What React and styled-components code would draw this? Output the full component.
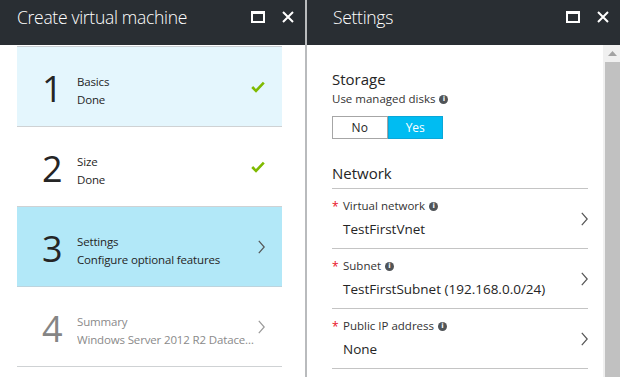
import React from 'react'
import styled, { createGlobalStyle } from 'styled-components'

const GlobalStyle = createGlobalStyle`
  html, body { margin: 0; padding: 0; }
  body {
    font-family: "Open Sans", "Noto Sans", "Liberation Sans", sans-serif;
    background: #b9bbbd;
    color: #252525;
  }
`;

const Page = styled.div`
  display: flex;
  gap: 2px;
  width: 620px;
  height: 377px;
  overflow: hidden;
`;

const Blade = styled.section`
  display: flex;
  flex-direction: column;
  width: ${p => p.width}px;
  flex-shrink: 0;
  background: #fff;
`;

const Header = styled.header`
  display: flex;
  align-items: center;
  box-sizing: border-box;
  height: 45px;
  flex-shrink: 0;
  background: #292e33;
  color: #fff;
  padding: 0 10px 12px ${p => p.pad}px;
`;

const Title = styled.h1`
  flex: 1;
  margin: 0;
  font-size: 17.5px;
  font-weight: 300;
  letter-spacing: -0.3px;
`;

const HeaderButton = styled.span`
  display: flex;
  width: 14px;
  height: 14px;
  align-items: center;
  justify-content: center;
  margin-left: 16px;
`;

const MaxIcon = () => (
  <svg width="14" height="12" viewBox="0 0 14 12">
    <rect x="1" y="1" width="12" height="10" fill="none" stroke="#fff" strokeWidth="2" />
    <rect x="0" y="0" width="14" height="3" fill="#fff" />
  </svg>
);

const CloseIcon = () => (
  <svg width="12" height="12" viewBox="0 0 12 12">
    <path d="M1 1 L11 11 M11 1 L1 11" stroke="#fff" strokeWidth="2" />
  </svg>
);

const StepList = styled.ul`
  list-style: none;
  margin: 1px 23px 0 17px;
  padding: 0;
  border-top: 1px solid #c8ced2;
`;

const Step = styled.li`
  display: flex;
  align-items: center;
  height: 79px;
  padding: 0 17px 0 25px;
  border-bottom: 1px solid ${p => p.active ? '#bcd4de' : '#cfd2d4'};
  background: ${p => p.active ? '#b2e8f8' : p.done ? '#e4f6fd' : '#fff'};
  color: ${p => p.muted ? '#8a8a8a' : '#252525'};
`;

const StepNumber = styled.span`
  width: 35px;
  font-size: 36px;
  line-height: 1;
  font-weight: 400;
  color: ${p => p.muted ? '#858585' : '#252525'};
  margin-top: 4px;
`;

const StepText = styled.div`
  flex: 1;
  min-width: 0;
  font-size: 11.5px;
  line-height: 18px;
  padding-top: 8px;
`;

const StepLine = styled.div`
  white-space: nowrap;
  overflow: hidden;
  text-overflow: ellipsis;
  max-width: 180px;
  letter-spacing: -0.15px;
`;

const Check = () => (
  <svg width="14" height="12" viewBox="0 0 14 12">
    <path d="M1.2 6 L5 9.8 L12.8 1.6" fill="none" stroke="#7fba00" strokeWidth="2.6" />
  </svg>
);

const Chevron = ({ color = '#555' }) => (
  <svg width="7" height="14" viewBox="0 0 7 14">
    <path d="M0.8 0.8 L6.2 7 L0.8 13.2" fill="none" stroke={color} strokeWidth="1.2" />
  </svg>
);

const Body = styled.div`
  flex: 1;
  display: flex;
  min-height: 0;
`;

const Content = styled.div`
  flex: 1;
  padding: 24px 15px 0 25px;
`;

const SectionTitle = styled.h2`
  margin: 0;
  font-size: 15px;
  font-weight: 400;
  line-height: 20px;
  color: #252525;
`;

const FieldLabel = styled.div`
  display: flex;
  align-items: center;
  gap: 4px;
  font-size: 11.5px;
  line-height: 16px;
  color: #333;
  margin-top: ${p => p.top || 0}px;
`;

const InfoDot = styled.span`
  display: inline-flex;
  align-items: center;
  justify-content: center;
  width: 9px;
  height: 9px;
  border-radius: 50%;
  background: #505458;
  color: #fff;
  font-size: 7px;
  font-weight: 700;
  line-height: 1;
  font-family: "DejaVu Sans", sans-serif;
`;

const Toggle = styled.div`
  display: flex;
  width: 111px;
  height: 23px;
  margin-top: 9px;
`;

const ToggleOption = styled.span`
  flex: 1;
  display: flex;
  align-items: center;
  justify-content: center;
  font-size: 12px;
  box-sizing: border-box;
  border: 1px solid ${p => p.on ? '#0aa7d8' : '#a6a6a6'};
  background: ${p => p.on ? '#00bcf2' : '#fff'};
  color: ${p => p.on ? '#fff' : '#252525'};
`;

const NetworkTitle = styled(SectionTitle)`
  margin-top: 24px;
  padding-bottom: 5px;
  border-bottom: 1px solid #c4c4c4;
`;

const FieldRow = styled.div`
  display: flex;
  align-items: center;
  height: 59px;
  border-bottom: 1px solid #c4c4c4;
`;

const FieldMain = styled.div`
  flex: 1;
  display: flex;
  flex-direction: column;
  margin-top: -1px;
`;

const Required = styled.span`
  color: #e81123;
  font-size: 12px;
  width: 7px;
  align-self: flex-start;
  margin-top: 1px;
`;

const FieldValue = styled.div`
  font-size: 13.5px;
  line-height: 20px;
  color: #252525;
  margin: 4px 0 0 11px;
`;

const Scrollbar = styled.div`
  display: flex;
  flex-direction: column;
  width: 17px;
  background: #f0f0f0;
  padding-left: 2px;
  box-sizing: border-box;
`;

const ScrollArrow = styled.div`
  height: 17px;
  display: flex;
  align-items: center;
  justify-content: center;
`;

const ScrollThumb = styled.div`
  flex: 1;
  background: #c1c1c1;
`;

const steps = [
  { n: 1, title: 'Basics', sub: 'Done', done: true },
  { n: 2, title: 'Size', sub: 'Done', done: true, plain: true },
  { n: 3, title: 'Settings', sub: 'Configure optional features', active: true },
  { n: 4, title: 'Summary', sub: 'Windows Server 2012 R2 Datacenter', muted: true },
];

const fields = [
  { label: 'Virtual network', value: 'TestFirstVnet' },
  { label: 'Subnet', value: 'TestFirstSubnet (192.168.0.0/24)' },
  { label: 'Public IP address', value: 'None' },
];

export default function App() {
  return (
    <>
      <GlobalStyle />
      <Page>
        <Blade width={305}>
          <Header pad={17}>
            <Title>Create virtual machine</Title>
            <HeaderButton><MaxIcon /></HeaderButton>
            <HeaderButton><CloseIcon /></HeaderButton>
          </Header>
          <StepList>
            {steps.map(s => (
              <Step key={s.n} done={s.done && !s.plain} active={s.active} muted={s.muted}>
                <StepNumber muted={s.muted}>{s.n}</StepNumber>
                <StepText>
                  <StepLine>{s.title}</StepLine>
                  <StepLine>{s.sub}</StepLine>
                </StepText>
                {s.done ? <Check /> : <Chevron color={s.muted ? '#9a9a9a' : '#555'} />}
              </Step>
            ))}
          </StepList>
        </Blade>
        <Blade width={313}>
          <Header pad={26}>
            <Title>Settings</Title>
            <HeaderButton><MaxIcon /></HeaderButton>
            <HeaderButton><CloseIcon /></HeaderButton>
          </Header>
          <Body>
            <Content>
              <SectionTitle>Storage</SectionTitle>
              <FieldLabel top={2}>Use managed disks <InfoDot>i</InfoDot></FieldLabel>
              <Toggle>
                <ToggleOption>No</ToggleOption>
                <ToggleOption on>Yes</ToggleOption>
              </Toggle>
              <NetworkTitle>Network</NetworkTitle>
              {fields.map(f => (
                <FieldRow key={f.label}>
                  <FieldMain>
                    <FieldLabel>
                      <Required>*</Required>
                      {f.label} <InfoDot>i</InfoDot>
                    </FieldLabel>
                    <FieldValue>{f.value}</FieldValue>
                  </FieldMain>
                  <Chevron />
                </FieldRow>
              ))}
            </Content>
            <Scrollbar>
              <ScrollArrow>
                <svg width="9" height="5" viewBox="0 0 9 5"><path d="M0 5 L4.5 0 L9 5 Z" fill="#a3a3a3" /></svg>
              </ScrollArrow>
              <ScrollThumb />
            </Scrollbar>
          </Body>
        </Blade>
      </Page>
    </>
  )
}
